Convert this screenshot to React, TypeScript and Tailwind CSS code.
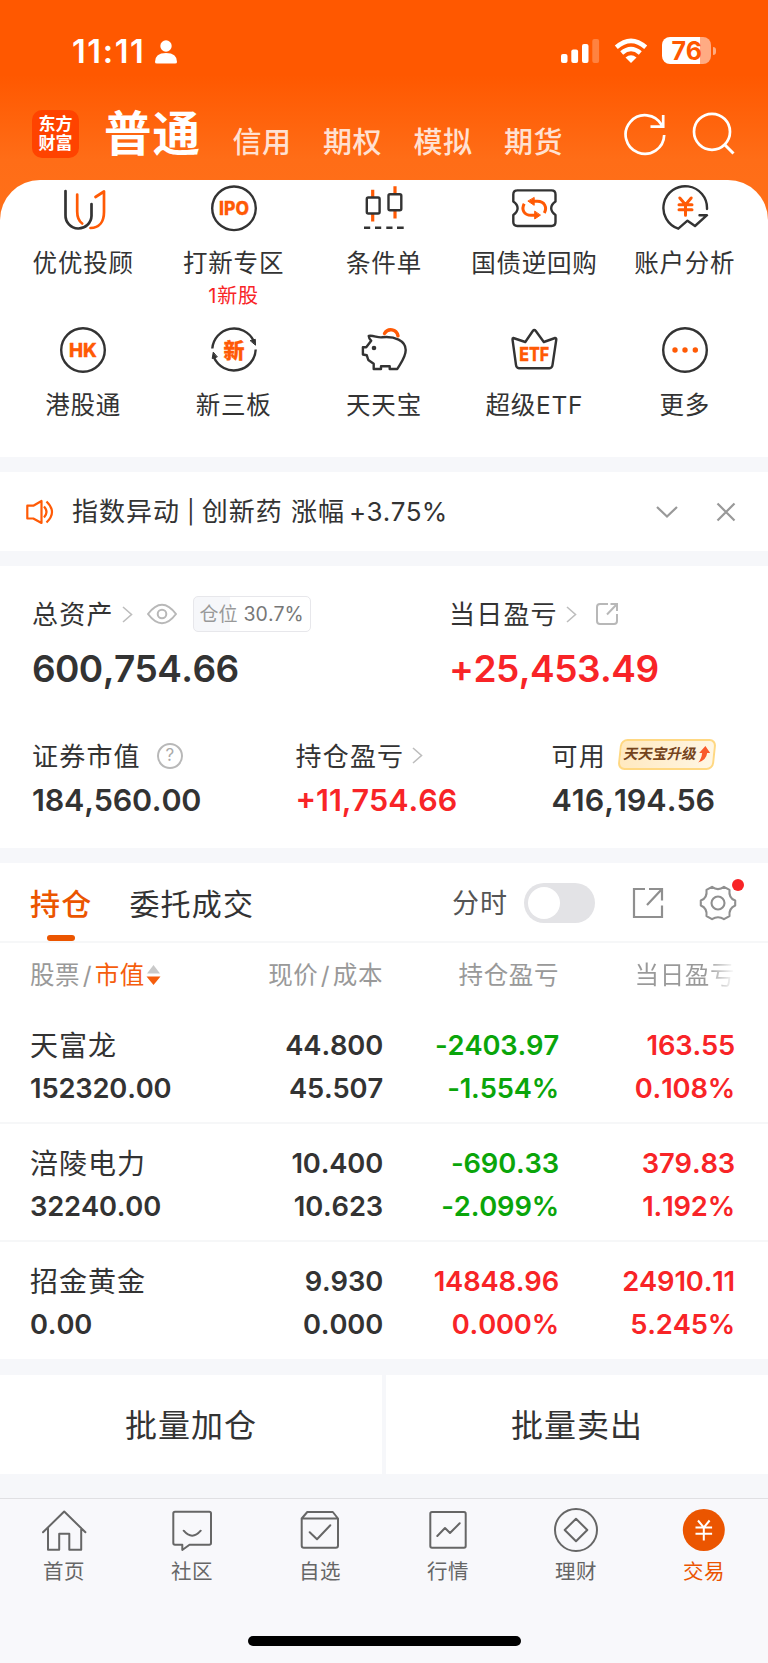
import React from "react";

const DARK = "#333333";
const ORANGE = "#ff5a05";

function Icon({ children, size = 48, sw = 2.4, color = DARK }: { children: React.ReactNode; size?: number; sw?: number; color?: string }) {
  return (
    <svg width={size} height={size} viewBox="0 0 48 48" fill="none" stroke={color} strokeWidth={sw} strokeLinecap="round" strokeLinejoin="round" className="block shrink-0">
      {children}
    </svg>
  );
}

function Glyph({ x, y, size, width, children }: { x: number; y: number; size: number; width: number; children: string }) {
  return (
    <text x={x} y={y} fontSize={size} textLength={width} lengthAdjust="spacingAndGlyphs" textAnchor="middle" fill={ORANGE} stroke={ORANGE} strokeWidth="0.300" className="font-['Inter','Noto_Sans_CJK_SC',sans-serif] font-extrabold">
      {children}
    </text>
  );
}

const services = [
  {
    label: "优优投顾",
    icon: (
      <Icon sw={2.7}>
        <path d="M6.500 7v24a13 13 0 0 0 26 1V20" />
        <path stroke={ORANGE} d="M18.200 10.500v17c0 6 1.500 9.500 5 12M36.500 13L45 7.500V28c0 10-5 16-13.500 16" />
      </Icon>
    ),
  },
  {
    label: "打新专区",
    note: "1新股",
    icon: (
      <Icon>
        <circle cx="24" cy="24.300" r="21.800" />
        <Glyph x={24} y={31.2} size={18.5} width={30}>IPO</Glyph>
      </Icon>
    ),
  },
  {
    label: "条件单",
    icon: (
      <Icon sw={2.4}>
        <path stroke={ORANGE} strokeWidth="3.200" strokeLinecap="butt" d="M12.700 5.700v7.500M12.700 30v7.500M35 2.300v7.500M35 26.500v8" />
        <rect x="6.800" y="13.500" width="12.800" height="16" rx="1.500" />
        <rect x="28.500" y="10.200" width="12.800" height="16" rx="1.500" />
        <path strokeLinecap="butt" strokeWidth="2.600" d="M4 43.700h6.200M15 43.700h6.200M26.300 43.700h6.200M37 43.700h6.700" />
      </Icon>
    ),
  },
  {
    label: "国债逆回购",
    icon: (
      <Icon>
        <path d="M7 6.400h34.500q4 0 4 4v7.200q-4.300 3-4.300 6.700t4.300 6.700v7q0 4-4 4H7.300q-4 0-4-4v-7q4.300-3 4.300-6.700t-4.300-6.700v-7.200q0-4 4-4" />
        <path stroke={ORANGE} strokeWidth="3" strokeLinecap="butt" d="M34.300 29c3-5.500.500-11.700-7-11.700h-4M14.200 19.800c-3 5.500-.5 11.500 7 11.500h4" />
        <path fill={ORANGE} stroke={ORANGE} strokeWidth="1" d="M24.200 13.800v7.500l-6-4zM24.700 27.500v7.500l5.500-3.700z" />
      </Icon>
    ),
  },
  {
    label: "账户分析",
    icon: (
      <Icon>
        <path d="M46 25A21.800 21.800 0 1 0 17.300 44.700L26.500 36.700 34 42 46 31.200h-7.500" />
        <path stroke={ORANGE} strokeWidth="3" strokeLinejoin="miter" d="M18.800 14l5.700 6.700 5.700-6.700M24.500 20.700v10.600M18 20.800h13M18 25.800h13" />
      </Icon>
    ),
  },
  {
    label: "港股通",
    icon: (
      <Icon>
        <circle cx="24" cy="24" r="21.800" />
        <Glyph x={24} y={31} size={19} width={28}>HK</Glyph>
      </Icon>
    ),
  },
  {
    label: "新三板",
    icon: (
      <Icon>
        <path strokeLinecap="butt" d="M2.300 22.500A21.800 21.800 0 0 1 43.500 14.500M45.700 23.500A21.800 21.800 0 0 1 4 31.500" />
        <path fill={DARK} strokeWidth="1" d="M40.500 14.500l4.800-1.200.2 5.500zM7 31l-4.800 1.500 1-6z" />
        <Glyph x={24} y={31.5} size={21} width={21}>新</Glyph>
      </Icon>
    ),
  },
  {
    label: "天天宝",
    icon: (
      <Icon>
        <path d="M8.700 9.900c5-.8 8.300 1.800 13 1.400 13-1.500 24 3.500 24 12.700 0 7-4 11.500-8.400 19H29.700v-2.700H21V43H13.700V37.800L8.300 34 6.800 29.300 2.900 28.500V21.300H6.200L11.200 14.700Q9 13 8.700 9.900z" />
        <path stroke={ORANGE} strokeWidth="3.400" d="M24.500 7.500c3.500-6 12-4.500 13.500 2.300" />
        <circle cx="14" cy="22" r="2.300" fill={DARK} stroke="none" />
      </Icon>
    ),
  },
  {
    label: "超级ETF",
    icon: (
      <Icon>
        <path d="M3.300 12q-1 .3-.8 1.500L6 39q.3 3 3 3.200h30.500q2.700-.2 3-3.200L46.300 13.500q.2-1.500-1.200-1.500L33.800 16 25.800 5q-1.500-2-3 0L15.300 16z" />
        <Glyph x={24.2} y={35.3} size={19} width={30}>ETF</Glyph>
      </Icon>
    ),
  },
  {
    label: "更多",
    icon: (
      <Icon>
        <circle cx="24" cy="24" r="21.800" />
        <g fill={ORANGE} stroke="none">
          <circle cx="14" cy="24" r="2.700" />
          <circle cx="24" cy="24" r="2.700" />
          <circle cx="34.300" cy="24" r="2.700" />
        </g>
      </Icon>
    ),
  },
];

const RED = "text-[#f82427]";
const GREEN = "text-[#0aa50a]";

const holdings = [
  { name: "天富龙", value: "152320.00", price: "44.800", cost: "45.507", pl: "-2403.97", plPct: "-1.554%", plColor: GREEN, day: "163.55", dayPct: "0.108%" },
  { name: "涪陵电力", value: "32240.00", price: "10.400", cost: "10.623", pl: "-690.33", plPct: "-2.099%", plColor: GREEN, day: "379.83", dayPct: "1.192%" },
  { name: "招金黄金", value: "0.00", price: "9.930", cost: "0.000", pl: "14848.96", plPct: "0.000%", plColor: RED, day: "24910.11", dayPct: "5.245%" },
];

const nav = [
  { label: "首页", icon: <path d="M3 26.300L24.200 5.500l21.200 20.800M8 22v21.700h11.200V27.700h10.100v16h11.900V22" /> },
  {
    label: "社区",
    icon: <path d="M7 5.700h34.300q1.700 0 1.700 1.700V37q0 1.700-1.700 1.700H21.500L14.300 44v-5.300H7q-1.700 0-1.700-1.700V7.400Q5.300 5.700 7 5.700zM15.700 24.700q8.500 10 17 0" />,
  },
  {
    label: "自选",
    icon: <path d="M5.700 12.500H42V39.500q0 2.200-2.200 2.200H7.900q-2.200 0-2.200-2.200zL11.300 6h25.500L42 12.500M13.700 26.300l7.300 7 13.300-14" />,
  },
  { label: "行情", icon: <path d="M8 6h32q1.700 0 1.700 1.700V40q0 1.700-1.700 1.700H8q-1.700 0-1.700-1.700V7.700Q6.300 6 8 6zM13.300 30l7.700-8 5 5 9.700-9.700" /> },
  {
    label: "理财",
    icon: (
      <>
        <circle cx="24" cy="24" r="21" />
        <path d="M24 12.700L35.300 24 24 35.300 12.700 24z" />
      </>
    ),
  },
  {
    label: "交易",
    active: true,
    icon: (
      <>
        <circle cx="23.800" cy="24" r="21" fill="#eb5500" stroke="none" />
        <path stroke="#fff" strokeLinecap="butt" d="M18 14.500l5.800 7 5.800-7M23.800 21.500v13M15.500 21.500h16.600M15.500 27.700h16.600" />
      </>
    ),
  },
];

function Chevron() {
  return (
    <svg width="11" height="17" viewBox="0 0 11 17" fill="none" stroke="#bdbdbd" strokeWidth="1.600" className="block shrink-0">
      <path d="M1 1l8.500 7.500L1 16" />
    </svg>
  );
}

export default function App() {
  return (
    <div className="flex h-[1663px] w-[768px] flex-col overflow-hidden bg-[#f6f7fa] font-['Inter','Noto_Sans_CJK_SC',sans-serif] text-[#333] [font-kerning:none]">
      <div className="bg-[linear-gradient(to_bottom,#ff5800_0px,#ff5800_75px,#ff6d17_160px,#ff7019_220px)]">
        <div className="flex h-[103px] items-start justify-between pt-[37px] pr-[52px] pl-[72px] text-white">
          <div className="flex items-center gap-[9px]">
            <span className="text-[32.500px] leading-[30px] font-semibold tracking-[1.600px]">11:11</span>
            <svg width="24" height="26" viewBox="0 0 24 26" fill="#fff" className="block">
              <circle cx="12" cy="7" r="5.700" />
              <path d="M1 23q0-9 11-9t11 9q0 1.500-2 1.500H3q-2 0-2-1.500z" />
            </svg>
          </div>
          <div className="flex items-center">
            <svg width="40" height="26" viewBox="0 0 40 26" fill="#fff" className="mr-[14px] block">
              <rect x="1" y="16" width="6.500" height="9" rx="2" />
              <rect x="11.300" y="11.500" width="6.800" height="13.500" rx="2" />
              <rect x="22" y="6" width="6.500" height="19" rx="2" />
              <rect x="32.300" y="1" width="6.800" height="24" rx="2" opacity=".25" />
            </svg>
            <svg width="34" height="26" viewBox="0 0 34 26" fill="none" stroke="#fff" strokeWidth="4.500" className="mr-[14px] block">
              <path d="M2.300 9.300q14.700-13 29.400 0" />
              <path d="M7.700 15q9.300-8 18.600 0" />
              <path fill="#fff" stroke="none" d="M17 25l-5.500-5.500q5.500-4.500 11 0z" />
            </svg>
            <div className="flex h-[27px] w-[49px] items-center justify-center rounded-[8px] bg-[linear-gradient(to_right,#fff_38px,#ffab83_38px)] pt-[1px] text-[25px] leading-none font-bold tracking-[-0.500px] text-[#ff5800]">
              76
            </div>
            <div className="ml-[2px] h-[8px] w-[3px] rounded-r-full bg-white/50" />
          </div>
        </div>
        <div className="flex h-[77px] items-start pr-[33px] pl-[32px] text-white">
          <div className="mt-[7px] flex h-[48px] w-[47px] flex-col items-center justify-center rounded-[10px] bg-[#ff4300] text-[17px] leading-[19px] font-bold">
            <span>东方</span>
            <span>财富</span>
          </div>
          <span className="mt-[1px] ml-[25px] text-[47.500px] leading-[60px] font-bold tracking-[1px]">普通</span>
          <div className="ml-[31.500px] flex gap-[31.500px] pt-[23.500px] text-[29px] leading-[32px] font-medium tracking-[0.500px] text-[#ffe1d2]">
            <span>信用</span>
            <span>期权</span>
            <span>模拟</span>
            <span>期货</span>
          </div>
          <div className="ml-auto flex gap-[25px] pt-[9px]">
            <svg width="43" height="44" viewBox="0 0 43 44" fill="none" stroke="#fff" strokeWidth="2.700" className="block">
              <path d="M40.200 23A19.300 19.300 0 1 1 37.800 13.200M39.200 3v11.700H26.500" />
            </svg>
            <svg width="43" height="44" viewBox="0 0 43 44" fill="none" stroke="#fff" strokeWidth="2.700" className="block">
              <circle cx="20" cy="19.800" r="18" />
              <path strokeWidth="3" d="M32.500 32.500l9 9" />
            </svg>
          </div>
        </div>
        <div className="grid h-[277px] grid-cols-5 grid-rows-[142px_135px] rounded-t-[40px] bg-white px-2">
          {services.map((s) => (
            <div key={s.label} className="flex flex-col items-center pt-[4px]">
              {s.icon}
              <span className="mt-[15px] text-[24.500px] leading-[32px] tracking-[0.800px] whitespace-nowrap">{s.label}</span>
              {s.note && <span className="mt-[2.500px] text-[20px] leading-[28px] tracking-[0.900px] text-[#f82427]">{s.note}</span>}
            </div>
          ))}
        </div>
      </div>

      <div className="mt-[15px] flex h-[79px] items-center bg-white pr-[32px] pl-[25px]">
        <svg width="29" height="26" viewBox="0 0 29 26" fill="none" stroke={ORANGE} strokeWidth="2.200" strokeLinejoin="round" className="block">
          <path d="M2.300 6.700h6L16.500 2v22l-8.200-4.500h-6zM19 7.500q5 5.500 0 11M21.500 2.500q11 10.500 0 21" />
        </svg>
        <span className="mt-[1px] ml-[18px] flex items-center text-[26px] leading-[36px] tracking-[1px] whitespace-pre">
          <span>指数异动</span>
          <span className="mr-[7px] ml-[7px] text-[23px] tracking-normal">|</span>
          <span>创新药 涨幅</span>
          <span className="ml-[4px] tracking-[0.300px]">+3.75%</span>
        </span>
        <svg width="22" height="14" viewBox="0 0 22 14" fill="none" stroke="#999" strokeWidth="2.200" className="ml-auto block">
          <path d="M1 2l10 9.500L21 2" />
        </svg>
        <svg width="20" height="20" viewBox="0 0 20 20" fill="none" stroke="#999" strokeWidth="2.200" className="ml-[38px] block">
          <path d="M1.500 1.500l17 17M18.500 1.500l-17 17" />
        </svg>
      </div>

      <div className="mt-[15px] h-[282px] bg-white pt-[28px]">
        <div className="flex">
          <div className="w-[418px] pl-[32px]">
            <div className="flex h-[40px] items-center">
              <span className="mt-[1px] text-[26px] tracking-[1.200px]">总资产</span>
              <div className="ml-[8px]"><Chevron /></div>
              <svg width="30" height="22" viewBox="0 0 30 22" fill="none" stroke="#b8b8b8" strokeWidth="2" className="ml-[14px] block">
                <path d="M1 11Q15-7.500 29 11 15 29.500 1 11z" />
                <circle cx="15" cy="11" r="4.300" />
              </svg>
              <div className="ml-[16px] flex h-[36px] w-[118px] items-center justify-center rounded-[5px] border border-[#e7e7eb] bg-[linear-gradient(to_right,#f6f7fa_30.700%,#fff_30.700%)] pt-[2px] whitespace-nowrap">
                <span className="text-[19px] text-[#999]">仓位</span>
                <span className="ml-[6px] text-[19.500px] text-[#777]">30.7%</span>
              </div>
            </div>
            <div className="mt-[10px] text-[37px] leading-[50px] font-semibold tracking-[-0.600px]">600,754.66</div>
          </div>
          <div className="pl-[31px]">
            <div className="flex h-[40px] items-center">
              <span className="mt-[1px] text-[26px] tracking-[1.200px]">当日盈亏</span>
              <div className="ml-[8px]"><Chevron /></div>
              <svg width="24" height="24" viewBox="0 0 24 24" fill="none" stroke="#b8b8b8" strokeWidth="2" className="ml-[18px] block">
                <path d="M13 2H5Q2 2 2 5v14q0 3 3 3h14q3 0 3-3v-7M15.500 2H22v7M22 2L12 12.500" />
              </svg>
            </div>
            <div className="mt-[10px] text-[37px] leading-[50px] font-semibold tracking-[-0.500px] text-[#f82427]">+25,453.49</div>
          </div>
        </div>
        <div className="mt-[41px] flex">
          <div className="w-[263px] pl-[32px]">
            <div className="flex h-[40px] items-center">
              <span className="mt-[2px] text-[26px] tracking-[1.200px]">证券市值</span>
              <div className="mt-[1px] ml-[16px] flex size-[26px] items-center justify-center rounded-full border-2 border-[#b8b8b8] text-[17px] leading-none text-[#aaa]">?</div>
            </div>
            <div className="mt-[5px] text-[30.500px] leading-[40px] font-semibold tracking-[-0.200px]">184,560.00</div>
          </div>
          <div className="w-[256px] pl-[32.500px]">
            <div className="flex h-[40px] items-center">
              <span className="mt-[2px] text-[26px] tracking-[1.200px]">持仓盈亏</span>
              <div className="ml-[8px]"><Chevron /></div>
            </div>
            <div className="mt-[5px] text-[30.500px] leading-[40px] font-semibold text-[#f82427]">+11,754.66</div>
          </div>
          <div className="pl-[32.500px]">
            <div className="flex h-[40px] items-center">
              <span className="mt-[2px] text-[26px] tracking-[1.200px]">可用</span>
              <div className="mb-[2px] ml-[13.500px] flex h-[31px] w-[96px] -skew-x-6 items-center justify-center rounded-[7px] border-2 border-[#ffd882] bg-[linear-gradient(to_right,#ffe9c0,#fff6e4)]">
                <span className="-skew-x-6 text-[14.500px] leading-none font-bold whitespace-nowrap text-[#75431c]">天天宝升级</span>
                <svg width="12" height="17" viewBox="0 0 12 17" fill="#f9592b" className="ml-[2px] block">
                  <path d="M6.500 0L12 7H9q0 7-8 9.500Q4 13 4 7H1z" />
                </svg>
              </div>
            </div>
            <div className="mt-[5px] text-[30.500px] leading-[40px] font-semibold">416,194.56</div>
          </div>
        </div>
      </div>

      <div className="mt-[14.500px] bg-white">
        <div className="flex h-[80px] items-center border-b-2 border-[#f6f7f8] pr-[31px] pl-[30px]">
          <div className="flex h-full flex-col items-center justify-between pt-[23px]">
            <span className="text-[30px] leading-[36px] font-medium tracking-[1.200px] text-[#eb5500]">持仓</span>
            <div className="h-[6px] w-[28px] rounded-[3px] bg-[#eb5500]" />
          </div>
          <span className="mt-[4px] ml-[37px] text-[30px] leading-[36px] tracking-[1.200px]">委托成交</span>
          <span className="mt-[4px] ml-auto text-[27px] leading-[36px] tracking-[1px] text-[#555]">分时</span>
          <div className="mt-[3px] ml-[16px] flex h-[40px] w-[71px] items-center rounded-full bg-[#e3e3e6] px-[4px]">
            <div className="size-[32px] rounded-full bg-white" />
          </div>
          <svg width="32" height="32" viewBox="0 0 32 32" fill="none" stroke="#8f8f8f" strokeWidth="2.200" className="mt-[3px] ml-[37px] block">
            <path d="M13 2H2v28h28V18.500M17 2h13v11.500M30 2L15 18" />
          </svg>
          <div className="relative mt-[3px] ml-[35px]">
            <svg width="38" height="38" viewBox="0 0 38 38" fill="none" stroke="#8f8f8f" strokeWidth="2.100" strokeLinejoin="round" className="block">
              <path d="M13 2.800q6 4.500 12 0l5.500 3q-1 8.500 5.700 10.700v5q-6.700 3-5.700 10.700l-5.500 3q-6-4-12 0l-5.500-3q1-8-5.700-10.700v-5q6.700-2.200 5.700-10.700z" />
              <circle cx="19" cy="19" r="6.500" />
            </svg>
            <div className="absolute -top-[5px] -right-[7px] size-[12px] rounded-full bg-[#f82427]" />
          </div>
        </div>
        <div className="flex h-[63px] items-center pt-[2px] pl-[30px] text-[24.500px] text-[#999]">
          <div className="flex w-[190px] items-center tracking-[0.600px]">
            <span>股票</span>
            <span className="mx-[2.500px]">/</span>
            <span className="text-[#f55d0c]">市值</span>
            <svg width="15" height="20" viewBox="0 0 15 20" className="ml-[1px] block">
              <path fill="#c9c9c9" d="M7.500 0L14 8.500H1z" />
              <path fill="#f55d0c" d="M7.500 20L14.500 11.500H.5z" />
            </svg>
          </div>
          <span className="w-[163px] text-right tracking-[0.600px]">现价<span className="mx-[2.500px]">/</span>成本</span>
          <span className="w-[176px] text-right tracking-[0.600px]">持仓盈亏</span>
          <span className="w-[176px] bg-[linear-gradient(to_right,#999_84%,#fff_100%)] bg-clip-text text-right tracking-[0.600px] text-transparent">当日盈亏</span>
        </div>
        {holdings.map((h, i) => (
          <div key={h.name} className={`flex pt-[18px] pl-[30px] text-[27.300px] leading-[43px] font-semibold tracking-[-0.150px] ${i < 2 ? "h-[118px] border-b-2 border-[#f6f7f8]" : "h-[117px]"}`}>
            <div className="w-[190px]">
              <div className="h-[43px] pt-[1px] text-[28px] font-normal tracking-[1px]">{h.name}</div>
              <div>{h.value}</div>
            </div>
            <div className="w-[163px] text-right">
              <div>{h.price}</div>
              <div>{h.cost}</div>
            </div>
            <div className={`w-[176px] text-right ${h.plColor}`}>
              <div>{h.pl}</div>
              <div>{h.plPct}</div>
            </div>
            <div className="w-[176px] text-right text-[#f82427]">
              <div>{h.day}</div>
              <div>{h.dayPct}</div>
            </div>
          </div>
        ))}
      </div>

      <div className="mt-[16.500px] flex h-[98.500px] shrink-0 gap-[4px] text-[32px] tracking-[1px]">
        <div className="flex flex-1 items-center justify-center bg-white pt-[3px]">批量加仓</div>
        <div className="flex flex-1 items-center justify-center bg-white pt-[3px]">批量卖出</div>
      </div>

      <div className="mt-[24px] flex flex-1 flex-col items-center border-t border-[#e0e0e3] bg-[#f8f8fb]">
        <div className="grid w-full grid-cols-6 pt-[7px]">
          {nav.map((n) => (
            <div key={n.label} className={`flex flex-col items-center ${n.active ? "text-[#eb5500]" : "text-[#666]"}`}>
              <Icon sw={2} color="#666">{n.icon}</Icon>
              <span className="mt-[4px] text-[20.500px] leading-[28px] tracking-[0.600px]">{n.label}</span>
            </div>
          ))}
        </div>
        <div className="mt-[50px] h-[10px] w-[273px] rounded-full bg-black" />
      </div>
    </div>
  );
}
